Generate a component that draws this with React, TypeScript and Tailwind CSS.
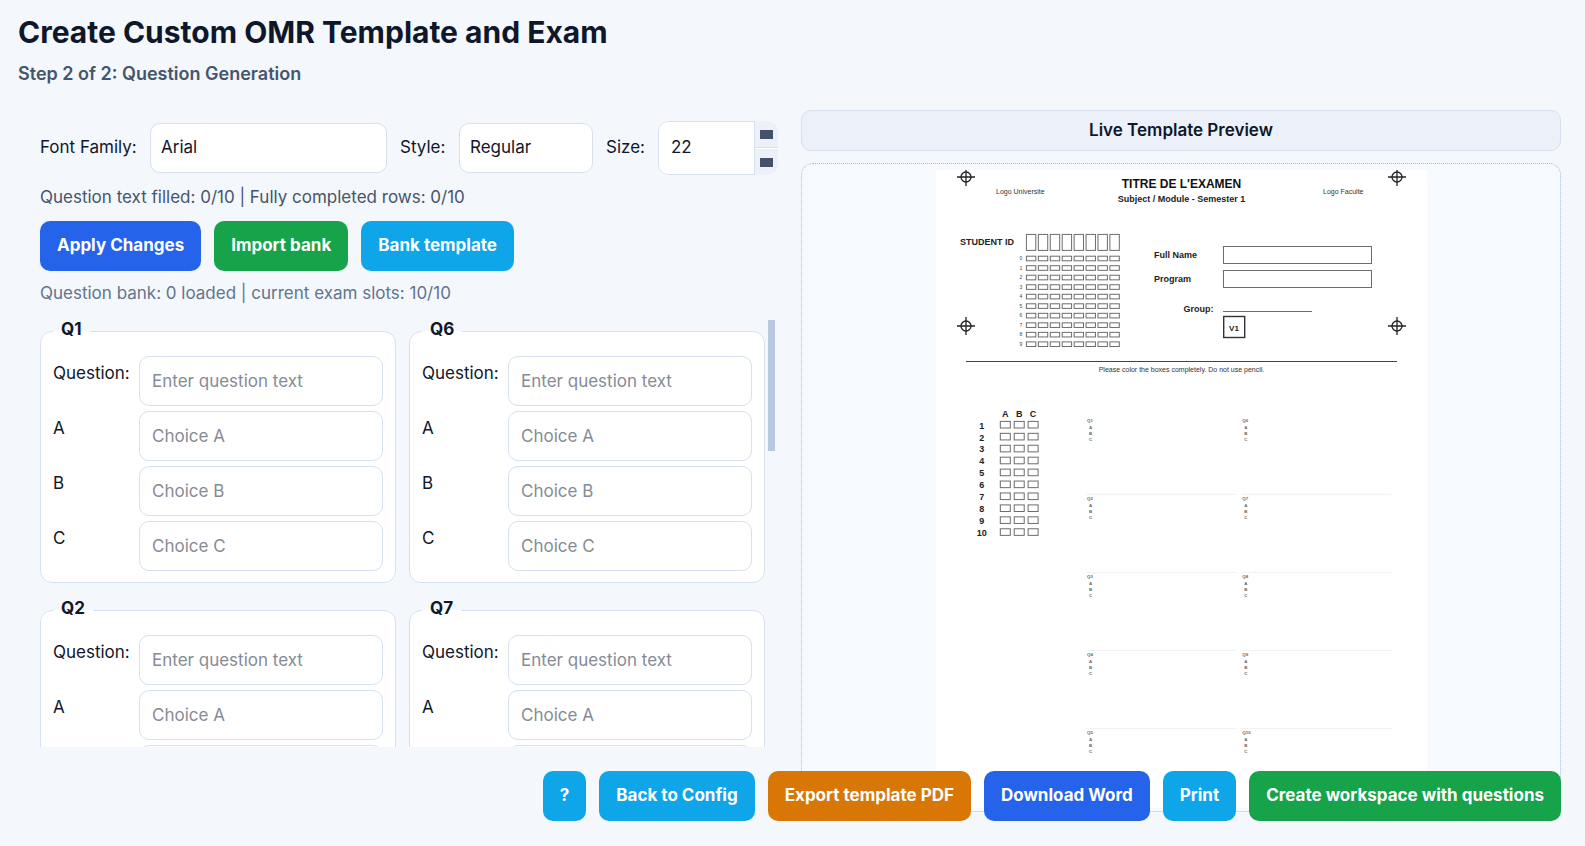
import { useState, type ReactNode } from "react";

const field =
  "min-w-0 rounded-[10px] border border-[#d6e0ee] bg-white text-[17px] text-slate-900 outline-none focus:border-blue-400";

const solid: Record<string, string> = {
  blue: "bg-[#2563eb] hover:bg-blue-700",
  green: "bg-[#16a34a] hover:bg-green-700",
  sky: "bg-[#0ea5e9] hover:bg-sky-600",
  amber: "bg-[#d97706] hover:bg-amber-700",
};

function Button({ tone, children }: { tone: string; children: ReactNode }) {
  return (
    <button
      type="button"
      className={`h-[50px] shrink-0 rounded-[10px] px-[17px] text-[17px] font-bold whitespace-nowrap text-white ${solid[tone]}`}
    >
      {children}
    </button>
  );
}

function QuestionCard({ n }: { n: number }) {
  const rows = [
    { label: "Question:", hint: "Enter question text" },
    { label: "A", hint: "Choice A" },
    { label: "B", hint: "Choice B" },
    { label: "C", hint: "Choice C" },
  ];
  return (
    <fieldset className="min-w-0 rounded-xl border border-[#d6e0ee] bg-white px-3 pt-[14px] pb-[11px]">
      <legend className="px-2 pb-1 text-[17px] leading-[18px] font-bold">{`Q${n}`}</legend>
      <div className="flex flex-col gap-[5px]">
        {rows.map((row) => (
          <div key={row.label} className="flex">
            <label htmlFor={`q${n}-${row.label}`} className="w-[86px] shrink-0 pt-[6px] leading-[22px]">
              {row.label}
            </label>
            <input
              id={`q${n}-${row.label}`}
              placeholder={row.hint}
              className={`${field} h-[50px] flex-1 px-3 placeholder:text-[#858b95]`}
            />
          </div>
        ))}
      </div>
    </fieldset>
  );
}

function Mark({ x, y }: { x: number; y: number }) {
  return (
    <g stroke="#222" fill="none" strokeWidth="1.3">
      <circle cx={x} cy={y} r="5" />
      <path d={`M${x - 9} ${y}h18M${x} ${y - 9}v18`} />
    </g>
  );
}

const range = (n: number) => Array.from({ length: n }, (_, i) => i);

function TemplateSheet() {
  return (
    <svg
      viewBox="936 170 491 638"
      preserveAspectRatio="xMidYMin slice"
      className="h-full w-[491px] max-w-full bg-white font-['Liberation_Sans',Arial,sans-serif]"
      role="img"
      aria-label="Exam template"
      fill="#222"
    >
      {[966, 1397].map((x) => [177, 326].map((y) => <Mark key={`${x}-${y}`} x={x} y={y} />))}
      <text x="996" y="194" fontSize="7" fill="#333">Logo Universite</text>
      <text x="1323" y="194" fontSize="7" fill="#333">Logo Faculte</text>
      <g fontWeight="700" textAnchor="middle">
        <text x="1181.5" y="188.3" fontSize="12" fill="#111">TITRE DE L'EXAMEN</text>
        <text x="1181.5" y="201.6" fontSize="9">Subject / Module - Semester 1</text>
        <text x="1234" y="331" fontSize="8">V1</text>
      </g>
      <g fontWeight="700" fontSize="9">
        <text x="960" y="245.3">STUDENT ID</text>
        <text x="1154" y="258.3">Full Name</text>
        <text x="1154" y="282.2">Program</text>
        <text x="1183.5" y="312">Group:</text>
      </g>
      <g fill="none" stroke="#6c6c6c" strokeWidth="1">
        {range(8).map((c) => (
          <rect key={c} x={1026.4 + c * 11.93} y="234.4" width="9.4" height="16" />
        ))}
        {range(10).map((r) =>
          range(8).map((c) => (
            <rect key={`${r}-${c}`} x={1026.4 + c * 11.93} y={256.2 + r * 9.52} width="9.4" height="4.6" />
          ))
        )}
        <rect x="1223.5" y="246.5" width="148" height="17" />
        <rect x="1223.5" y="270.5" width="148" height="17" />
        <path d="M1223 311.5h89" />
      </g>
      <rect x="1223.7" y="316.5" width="21" height="21" fill="none" stroke="#333" strokeWidth="1.4" />
      {range(10).map((r) => (
        <text key={r} x="1021" y={260 + r * 9.52} fontSize="5" textAnchor="middle" fill="#444">
          {r}
        </text>
      ))}
      <path d="M966 361.5h431" stroke="#444" />
      <text x="1181.5" y="371.6" fontSize="7" textAnchor="middle" fill="#333">
        Please color the boxes completely. Do not use pencil.
      </text>
      <g fontWeight="700" fontSize="9" textAnchor="middle">
        {["A", "B", "C"].map((t, i) => (
          <text key={t} x={1005.3 + i * 13.9} y="416.7">{t}</text>
        ))}
        {range(10).map((r) => (
          <text key={r} x="981.7" y={428.6 + r * 11.93}>{r + 1}</text>
        ))}
      </g>
      <g fill="none" stroke="#6c6c6c" strokeWidth="1">
        {range(10).map((r) =>
          range(3).map((c) => (
            <rect key={`${r}-${c}`} x={1000.3 + c * 13.9} y={421.4 + r * 11.93} width="10" height="6.6" />
          ))
        )}
      </g>
      {range(2).map((c) =>
        range(5).map((r) => {
          const x = 1087 + c * 155.3;
          const y = 421.6 + r * 78.1;
          return (
            <g key={`${r}-${c}`} fontSize="4.4" fontWeight="700" fill="#666">
              <text x={x} y={y}>{`Q${c * 5 + r + 1}`}</text>
              {["A", "B", "C"].map((t, i) => (
                <text key={t} x={x + 3.6} y={y + 7.2 + i * 6} textAnchor="middle">{t}</text>
              ))}
              {r > 0 && <path d={`M${x - 1} ${y - 5.4}h150`} stroke="#f1f1f1" />}
            </g>
          );
        })
      )}
    </svg>
  );
}

export default function App() {
  const [size, setSize] = useState(22);
  const step = "flex w-full flex-1 items-center justify-center bg-[#ecf1f9]";
  return (
    <div className="relative flex h-screen flex-col bg-[#f4f7fc] font-['Inter','Open_Sans',sans-serif] text-[17px] text-slate-900">
      <header className="px-[18px] pt-3">
        <h1 className="text-[30px] leading-10 font-bold">Create Custom OMR Template and Exam</h1>
        <p className="mt-[10px] text-lg leading-6 font-semibold text-slate-600">Step 2 of 2: Question Generation</p>
      </header>

      <main className="mt-6 mb-[34px] grid min-h-0 flex-1 grid-cols-[738fr_760fr] gap-[23px] pr-6 pl-10">
        <section className="mb-[65px] flex min-h-0 min-w-0 flex-col pt-[11px]">
          <div className="flex items-center gap-[13px] whitespace-nowrap">
            <label htmlFor="family" className="w-[97px] shrink-0">Font Family:</label>
            <select id="family" className={`${field} h-[50px] w-[237px] appearance-none px-[10px]`}>
              <option>Arial</option>
            </select>
            <label htmlFor="style" className="w-[46px] shrink-0">Style:</label>
            <select id="style" className={`${field} h-[50px] w-[134px] appearance-none px-[10px]`}>
              <option>Regular</option>
            </select>
            <label htmlFor="size" className="w-[39px] shrink-0">Size:</label>
            <div className="flex h-[54px] w-[120px] overflow-hidden rounded-[10px]">
              <input
                id="size"
                type="number"
                value={size}
                onChange={(e) => setSize(Number(e.target.value))}
                className="w-full min-w-0 flex-1 [appearance:textfield] rounded-l-[10px] border border-[#d6e0ee] bg-white pl-3 outline-none"
              />
              <div className="flex w-[23px] flex-col gap-px bg-white">
                <button type="button" aria-label="Increase size" onClick={() => setSize(size + 1)} className={`${step} border-b border-[#d6e0ee]`}>
                  <span className="h-[9px] w-[13px] bg-[#435269]" />
                </button>
                <button type="button" aria-label="Decrease size" onClick={() => setSize(size - 1)} className={step}>
                  <span className="h-[9px] w-[13px] bg-[#435269]" />
                </button>
              </div>
            </div>
          </div>
          <p className="mt-[11px] leading-[22px] text-slate-600">
            Question text filled: 0/10 | Fully completed rows: 0/10
          </p>
          <div className="mt-[13px] flex gap-[13px]">
            <Button tone="blue">Apply Changes</Button>
            <Button tone="green">Import bank</Button>
            <Button tone="sky">Bank template</Button>
          </div>
          <p className="mt-[11px] leading-[22px] text-slate-500">
            Question bank: 0 loaded | current exam slots: 10/10
          </p>
          <div className="mt-4 mr-[3px] flex min-h-0 flex-1 gap-[3px]">
            <div className="grid min-w-0 flex-1 grid-cols-2 content-start gap-x-[13px] gap-y-4 overflow-y-auto [scrollbar-width:none]">
              {range(5).map((i) => [
                <QuestionCard key={i + 1} n={i + 1} />,
                <QuestionCard key={i + 6} n={i + 6} />,
              ])}
            </div>
            <div aria-hidden="true" className="w-[7px]">
              <div className="h-[131px] bg-[#b8c8df]" />
            </div>
          </div>
        </section>

        <section className="flex min-h-0 min-w-0 flex-col gap-3">
          <h2 className="rounded-[10px] border border-[#d6e0ee] bg-[#ecf1f9] py-2 text-center leading-[23px] font-semibold">
            Live Template Preview
          </h2>
          <div className="flex min-h-0 flex-1 justify-center overflow-hidden rounded-xl border border-dotted border-[#a9bad4] bg-[#f6faff] pt-[6px] pb-[3px]">
            <TemplateSheet />
          </div>
        </section>
      </main>

      <footer className="absolute right-6 bottom-[25px] flex gap-[13px]">
        <Button tone="sky">?</Button>
        <Button tone="sky">Back to Config</Button>
        <Button tone="amber">Export template PDF</Button>
        <Button tone="blue">Download Word</Button>
        <Button tone="sky">Print</Button>
        <Button tone="green">Create workspace with questions</Button>
      </footer>
    </div>
  );
}
